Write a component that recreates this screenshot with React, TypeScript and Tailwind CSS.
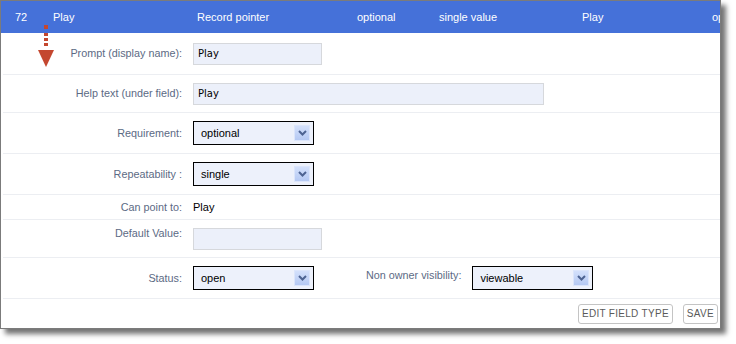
const headerCols = [
  { text: '72', w: 'w-[38px]' },
  { text: 'Play', w: 'w-[144px]' },
  { text: 'Record pointer', w: 'w-[160px]' },
  { text: 'optional', w: 'w-[82px]' },
  { text: 'single value', w: 'w-[143px]' },
  { text: 'Play', w: 'w-[130px]' },
  { text: 'optional', w: 'w-[60px]' },
];

const sans = "font-['Liberation_Sans',Arial,sans-serif]";

function Chevron() {
  return (
    <span className="flex h-[16px] w-[16px] items-center justify-center border border-[#dbe5fb] bg-gradient-to-b from-[#d3e0fb] to-[#b5c9f3]">
      <svg width="9" height="6" viewBox="0 0 9 6">
        <path d="M1 1 L4.5 4.5 L8 1" fill="none" stroke="#4d6392" strokeWidth="2" />
      </svg>
    </span>
  );
}

function Select({ value }: { value: string }) {
  return (
    <div className={`flex h-[24px] w-[121px] items-center justify-between border border-black bg-[#edf1fb] pl-[7px] pr-[3px] text-[11px] text-black ${sans}`}>
      <span>{value}</span>
      <Chevron />
    </div>
  );
}

function TextBox({ value, w }: { value: string; w: string }) {
  return (
    <div className={`flex h-[22px] ${w} items-center border border-[#d6d8dc] bg-[#ecf0fa] pl-[4px] font-['DejaVu_Sans',Verdana,sans-serif] text-[10px] text-black`}>
      {value}
    </div>
  );
}

function Row({ label, h, children, labelClass = '' }: { label: string; h: string; children?: React.ReactNode; labelClass?: string }) {
  return (
    <div className={`ml-[2px] flex ${h} items-center border-b border-[#eceef2]`}>
      <div className={`w-[179px] whitespace-nowrap text-right text-[10.8px] text-[#5c6a84] ${sans} ${labelClass}`}>{label}</div>
      <div className="ml-[11px] flex items-center">{children}</div>
    </div>
  );
}

function Arrow() {
  return (
    <div className="absolute left-[37px] top-[24px] flex flex-col items-center">
      <div className="h-[4px] w-[4px] bg-[#c4472f]" />
      <div className="mt-[4px] h-[3px] w-[4px] bg-[#c4472f]" />
      <div className="mt-[2px] h-[3px] w-[4px] bg-[#c4472f]" />
      <div className="mt-[2px] h-[3px] w-[4px] bg-[#c4472f]" />
      <svg width="16" height="17" viewBox="0 0 16 17" className="mt-[4px]">
        <polygon points="0,0 16,0 8,17" fill="#c4472f" />
      </svg>
    </div>
  );
}

export default function App() {
  return (
    <div className="h-[344px] w-[736px] bg-white">
      <div className="relative h-[329px] w-[721px] overflow-hidden border border-[#7b7b7b] bg-white shadow-[5px_5px_5px_rgba(0,0,0,0.55)]">
        <div className={`flex h-[32px] items-center bg-[#4571d9] pl-[14px] text-[11px] text-white ${sans}`}>
          {headerCols.map((c, i) => (
            <div key={i} className={`${c.w} shrink-0 whitespace-nowrap`}>
              {c.text}
            </div>
          ))}
        </div>

        <Row label="Prompt (display name):" h="h-[42px]">
          <TextBox value="Play" w="w-[129px]" />
        </Row>
        <Row label="Help text (under field):" h="h-[38px]">
          <TextBox value="Play" w="w-[351px]" />
        </Row>
        <Row label="Requirement:" h="h-[41px]">
          <Select value="optional" />
        </Row>
        <Row label="Repeatability :" h="h-[41px]">
          <Select value="single" />
        </Row>
        <Row label="Can point to:" h="h-[25px]">
          <span className={`text-[11px] text-black ${sans}`}>Play</span>
        </Row>
        <Row label="Default Value:" h="h-[38px]" labelClass="-mt-[10px]">
          <TextBox value="" w="w-[129px]" />
        </Row>
        <Row label="Status:" h="h-[41px]">
          <Select value="open" />
          <span className={`ml-[52px] -mt-[6px] whitespace-nowrap text-[10.8px] text-[#5c6a84] ${sans}`}>Non owner visibility:</span>
          <div className="ml-[11px]">
            <Select value="viewable" />
          </div>
        </Row>

        <div className="flex h-[29px] items-center justify-end gap-[10px] pr-[2px]">
          <button className={`h-[20px] rounded-[3px] border border-[#c4c4c4] bg-white px-[3px] text-[10px] tracking-[0.3px] text-[#5a5a5a] ${sans}`}>
            EDIT FIELD TYPE
          </button>
          <button className={`h-[20px] rounded-[3px] border border-[#c4c4c4] bg-white px-[3px] text-[10px] tracking-[0.3px] text-[#5a5a5a] ${sans}`}>
            SAVE
          </button>
        </div>

        <Arrow />
      </div>
    </div>
  );
}
